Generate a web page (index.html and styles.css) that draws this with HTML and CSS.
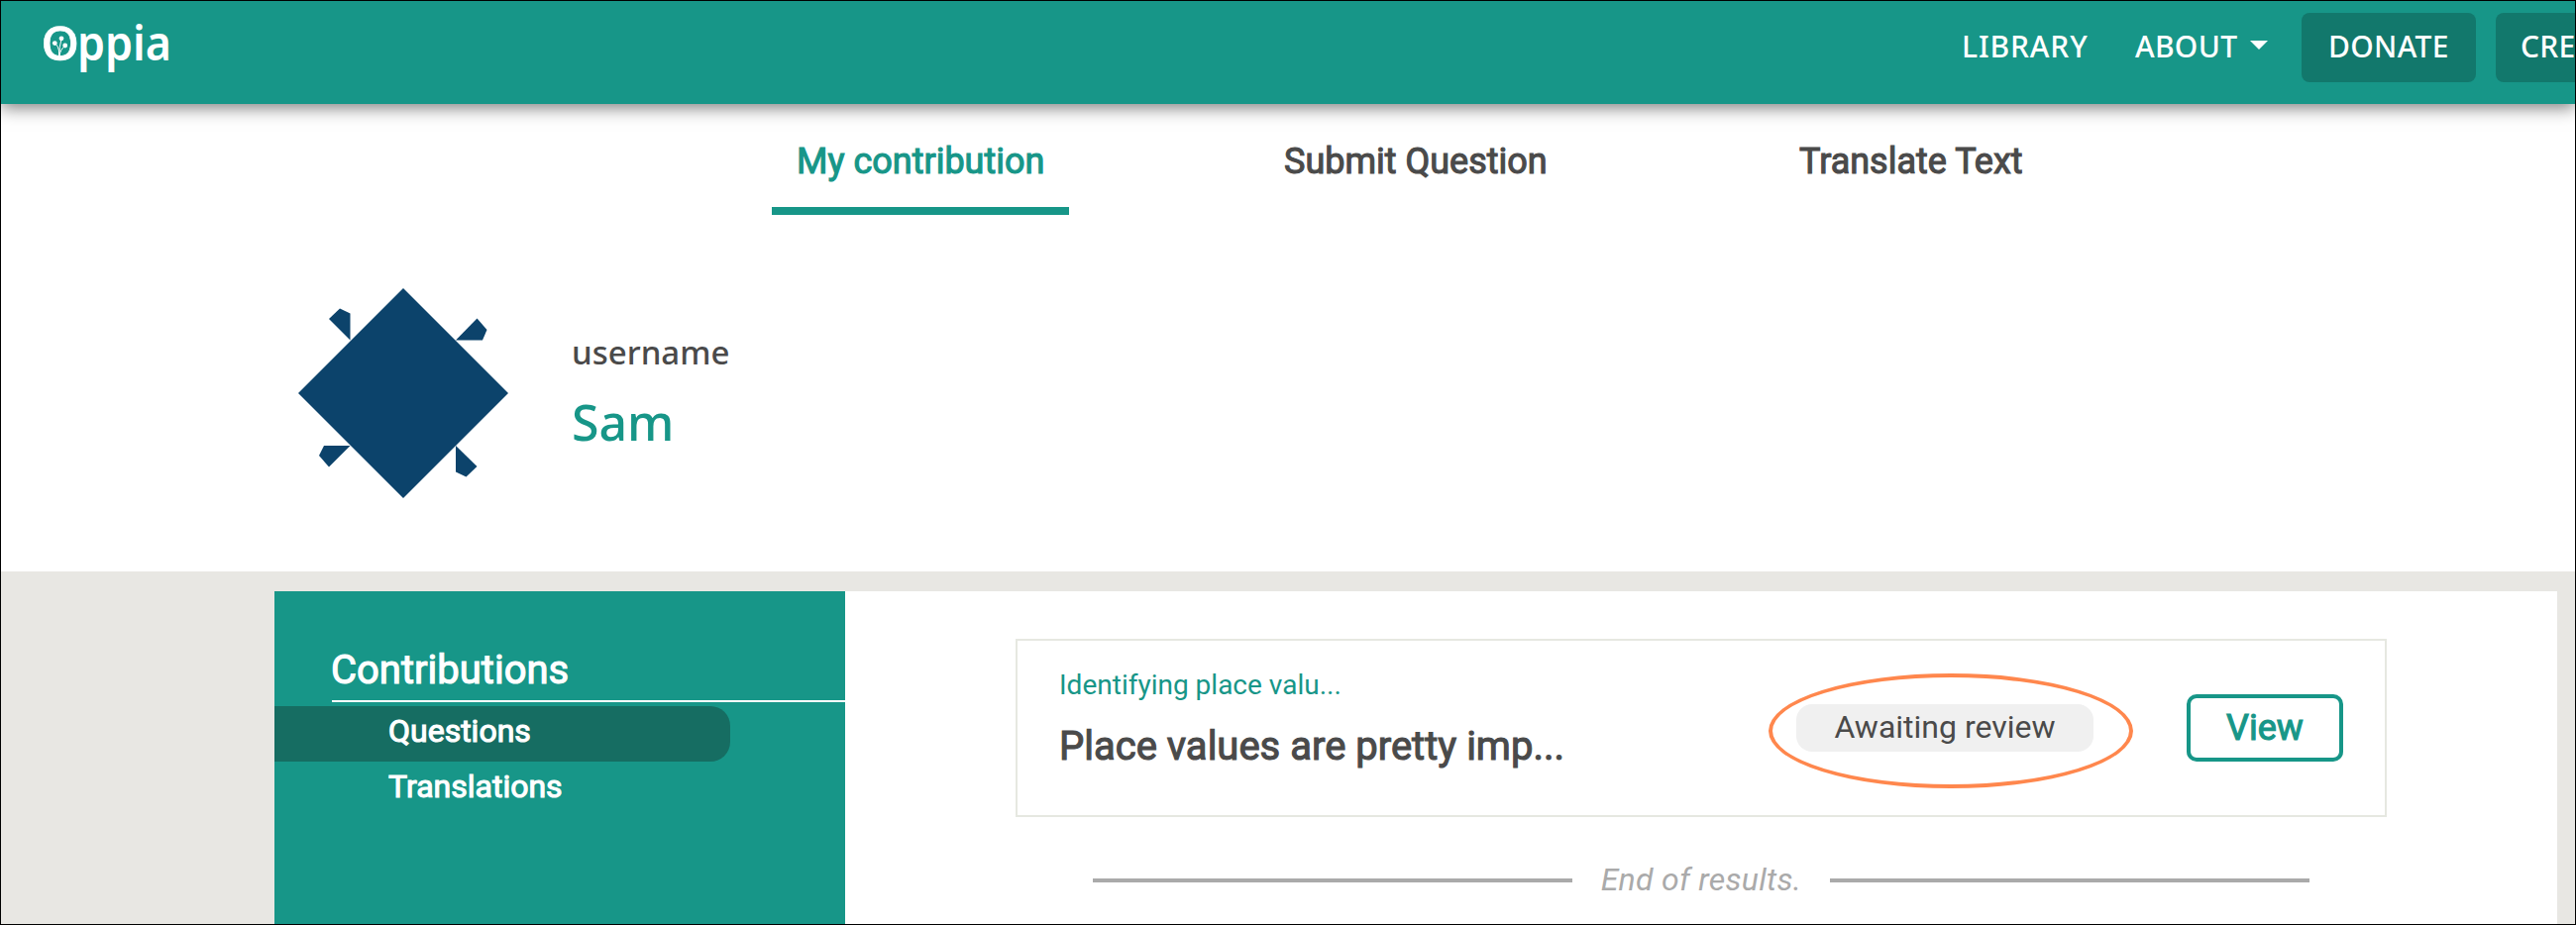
FILE: index.html
```
<!DOCTYPE html>
<html lang="en">
<head>
<meta charset="utf-8">
<title>Contributor Dashboard - Oppia</title>
<link rel="stylesheet" href="styles.css">
</head>
<body>
<div class="page">
  <header class="navbar">
    <a class="logo">
      <svg width="140" height="90" viewBox="-5 -14 140 90">
        <text class="logo-text logo-o" x="-2.5" y="46" textLength="38.500" lengthAdjust="spacingAndGlyphs">O</text>
        <text class="logo-text" x="34" y="46" textLength="95" lengthAdjust="spacingAndGlyphs">ppia</text>
        <g fill="none" stroke="#fff" stroke-width="1">
          <path d="M15.5 42V36Q15 32 11.500 28.500M15.500 42Q16 32 18 24M16 42Q16.500 35 22 31"/>
        </g>
        <g fill="#fff"><circle cx="11.300" cy="28.600" r="2.400"/><circle cx="18" cy="23.800" r="2.400"/><circle cx="21.700" cy="31" r="2.400"/></g>
      </svg>
    </a>
    <nav class="nav-links">
      <a class="nav-link library">LIBRARY</a>
      <a class="nav-link about">ABOUT<span class="caret"></span></a>
      <a class="nav-button donate">DONATE</a>
      <a class="nav-button create">CREATE</a>
    </nav>
  </header>

  <div class="tabs">
    <a class="tab mine active">My contribution</a>
    <a class="tab submit">Submit Question</a>
    <a class="tab translate">Translate Text</a>
  </div>

  <section class="profile">
    <svg class="avatar" width="212" height="212" viewBox="0 0 212 212" fill="#0c436b">
      <path d="M106 0 212 106 106 212 0 106Z"/>
      <path d="M31 31 42 20.500 52.500 25.500V52.500Z"/>
      <path d="M159 52.500 180.500 30.500 190.500 42 186 52.500Z"/>
      <path d="M159 159 180.500 180 169.500 190.500 159 185.500Z"/>
      <path d="M52.500 159 31 180.500 21 169 26 159Z"/>
    </svg>
    <div class="identity">
      <div class="identity-label">username</div>
      <div class="identity-name">Sam</div>
    </div>
  </section>

  <main class="dashboard">
    <aside class="sidebar">
      <h2 class="sidebar-title"><span>Contributions</span></h2>
      <a class="sidebar-item questions selected">Questions</a>
      <a class="sidebar-item translations">Translations</a>
    </aside>
    <section class="results">
      <article class="card">
        <div class="card-text">
          <div class="card-topic">Identifying place valu...</div>
          <div class="card-title">Place values are pretty imp...</div>
        </div>
        <div class="status"><span>Awaiting review</span><i class="highlight"></i></div>
        <button class="view">View</button>
      </article>
      <div class="end"><span class="rule"></span><em>End of results.</em><span class="rule"></span></div>
    </section>
  </main>
</div>
</body>
</html>
```
FILE: styles.css
```
* { box-sizing: border-box; }
body { margin: 0; font-family: Roboto, "Liberation Sans", sans-serif; color: #4a4a4a; }
.page {
  width: 2600px; height: 934px; overflow: hidden;
  display: flex; flex-direction: column;
  border: 1px solid #000; background: #fff;
  white-space: nowrap;
}

.navbar {
  position: relative;
  flex: none; height: 104px;
  display: flex; justify-content: space-between; align-items: flex-start;
  padding-left: 38px;
  background: #179688;
  box-shadow: 0 4px 16px rgba(0, 0, 0, .5);
}
.logo, .logo svg { display: block; height: 90px; }
.logo-text { font: 600 48px "Noto Sans", sans-serif; fill: #fff; }
.logo-o { font-weight: 500; stroke: #fff; stroke-width: .6px; }
.nav-links {
  display: flex; width: 619px; height: 82px; padding-top: 12px; overflow: hidden;
  font: 500 30px/70px "Noto Sans", sans-serif; color: #fff;
}
.nav-link, .nav-button { flex: none; height: 70px; line-height: 68px; }
.library { width: 175px; letter-spacing: .9px; }
.about { width: 168px; letter-spacing: .3px; }
.caret {
  display: inline-block; margin-left: 13px; vertical-align: 8px;
  border: 9px solid transparent; border-top: 9px solid #fff; border-bottom: 0;
}
.nav-button { border-radius: 8px; background: #12786c; letter-spacing: .3px; }
.donate { width: 176px; padding-left: 27px; margin-right: 20px; }
.create { width: 170px; padding-left: 25px; }

.tabs { flex: none; display: flex; height: 112px; padding: 28px 0 0 778px; font-size: 36px; line-height: 60px; }
.tab { height: 84px; padding: 0 27px; -webkit-text-stroke: 1.1px currentColor; }
.mine { width: 300px; margin-right: 190px; padding-left: 25px; }
.submit { width: 318px; margin-right: 202px; }
.active { color: #179688; border-bottom: 8px solid #179688; }

.profile { flex: none; display: flex; height: 360px; padding: 74px 0 0 300px; }
.avatar { display: block; }
.identity { padding: 35px 0 0 64px; font-family: "Noto Sans", sans-serif; }
.identity-label { font-size: 33px; line-height: 60px; font-weight: 500; }
.identity-name { font-size: 50px; line-height: 80px; font-weight: 500; color: #179688; }

.dashboard { flex: 1; display: flex; padding: 20px 18px 0 276px; background: #e8e7e3; }
.sidebar { width: 576px; background: #179688; color: #fff; -webkit-text-stroke: 1.1px #fff; }
.sidebar-title {
  height: 112px; margin: 0 0 4px 58px; padding-top: 50px;
  border-bottom: 2px solid #fff;
  font-size: 40px; line-height: 60px; font-weight: 400;
}
.sidebar-title span { margin-left: -1px; }
.sidebar-item {
  display: block; width: 460px; height: 56px; padding-left: 115px;
  font-size: 32px; line-height: 50px; border-radius: 0 20px 20px 0;
}
.selected { background: #166d62; }

.results { flex: 1; padding: 48px 172px 0; background: #fff; }
.card { display: flex; width: 1384px; height: 180px; border: 2px solid #e6e8e1; padding: 25px 42px 0 42px; }
.card-text { width: 744px; }
.card-topic { font-size: 28px; line-height: 40px; color: #179688; }
.card-title { font-size: 40px; line-height: 60px; padding-top: 12px; -webkit-text-stroke: 1.100px currentColor; }
.status {
  position: relative; width: 300px; height: 48px; margin: 39px 94px 0 0;
  border-radius: 16px; background: #f0f0f0;
  text-align: center; font-size: 32px; line-height: 47px;
}
.highlight { position: absolute; left: -28px; top: -31px; width: 368px; height: 116px; border: 4px solid #ff874d; border-radius: 50%; }
.view {
  width: 158px; height: 68px; margin-top: 29px; padding: 0;
  border: 4px solid #179688; border-radius: 10px; background: #fff;
  font: 400 36px/58px Roboto, sans-serif; color: #179688; -webkit-text-stroke: 1.100px currentColor;
}
.end { display: flex; align-items: center; justify-content: space-between; width: 1228px; height: 60px; margin: 34px 0 0 78px; color: #aaa; font-size: 32px; }
.end em { letter-spacing: .3px; padding-bottom: 2px; }
.rule { width: 484px; height: 4px; background: #aaa; }
```
